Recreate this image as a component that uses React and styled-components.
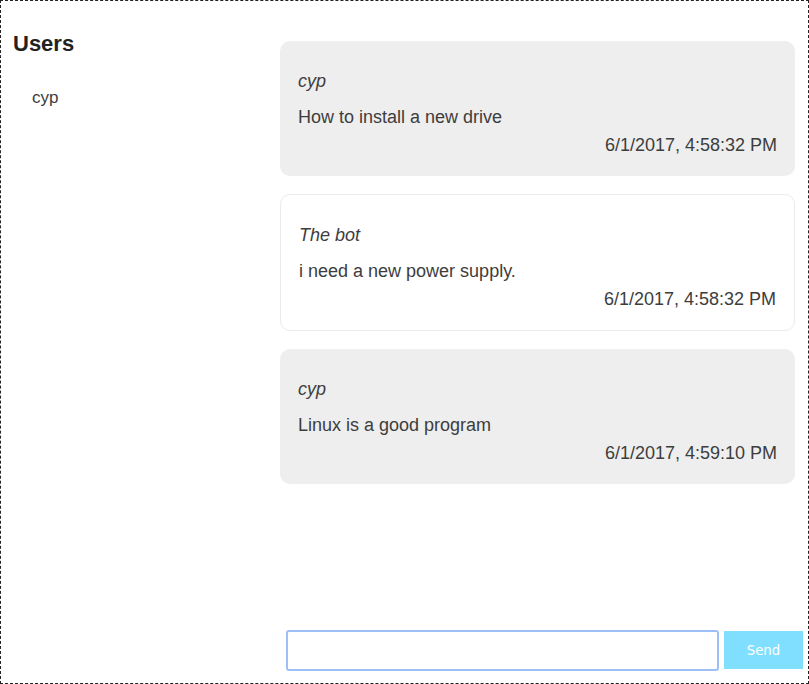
import React from 'react';
import styled, { createGlobalStyle } from 'styled-components';

const GlobalStyle = createGlobalStyle`
    body {
        margin: 0;
        font-family: "Liberation Sans", Arial, sans-serif;
        color: #3d3d3d;
    }
`

const Frame = styled.div`
    box-sizing: border-box;
    width: 809px;
    height: 684px;
    border: 1px dashed #222;
    display: flex;
`

const Sidebar = styled.div`
    width: 267px;
    padding: 30px 0 0 12px;
    .title {
        margin: 0;
        font-size: 22px;
        line-height: 26px;
        font-weight: bold;
        color: #222;
    }
    .user {
        margin: 31px 0 0 19px;
        font-size: 17px;
        line-height: 20px;
    }
`

const Main = styled.div`
    flex: 1;
    display: flex;
    flex-direction: column;
    padding-top: 40px;
`

const Messages = styled.div`
    flex: 1;
    display: flex;
    flex-direction: column;
    gap: 18px;
    padding-right: 13px;
`

const Message = styled.div`
    padding: 30px 18px 20px;
    border-radius: 10px;
    font-size: 18px;
    line-height: 21px;
    background: ${props => props.bot ? '#fff' : '#eee'};
    border: ${props => props.bot ? '1px solid #ebebeb' : 'none'};
    .author {
        font-style: italic;
        margin-bottom: 15px;
    }
    .text {
        margin-bottom: 7px;
    }
    .date {
        text-align: right;
    }
`

const Composer = styled.div`
    display: flex;
    gap: 5px;
    padding: 0 5px 12px 6px;
    input {
        box-sizing: border-box;
        flex: 1;
        height: 41px;
        border: 2px solid #9dbff6;
        border-radius: 3px;
        padding: 0 10px;
        font-size: 16px;
        outline: none;
    }
    button {
        width: 79px;
        height: 38px;
        margin-top: 1px;
        border: none;
        background: #80dfff;
        color: #fff;
        font-family: "DejaVu Sans", sans-serif;
        font-size: 13.33px;
    }
`

const messages = [
    { author: 'cyp', text: 'How to install a new drive', date: '6/1/2017, 4:58:32 PM' },
    { author: 'The bot', text: 'i need a new power supply.', date: '6/1/2017, 4:58:32 PM', bot: true },
    { author: 'cyp', text: 'Linux is a good program', date: '6/1/2017, 4:59:10 PM' },
]

const App = () => {
    return (
        <Frame>
            <GlobalStyle />
            <Sidebar>
                <h2 className="title">Users</h2>
                <div className="user">cyp</div>
            </Sidebar>
            <Main>
                <Messages>
                    {
                        messages.map((msg, i) => {
                            return (
                                <Message key={i} bot={msg.bot}>
                                    <div className="author">{msg.author}</div>
                                    <div className="text">{msg.text}</div>
                                    <div className="date">{msg.date}</div>
                                </Message>
                            )
                        })
                    }
                </Messages>
                <Composer>
                    <input type="text" autoFocus />
                    <button>Send</button>
                </Composer>
            </Main>
        </Frame>
    )
}

export default App;
